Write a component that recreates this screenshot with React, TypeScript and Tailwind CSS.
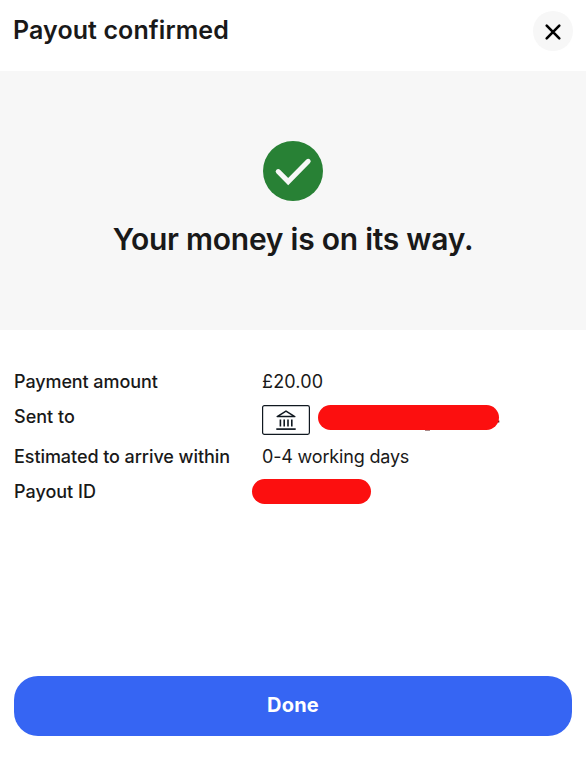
import type { ReactNode } from "react";

function CloseIcon() {
  return (
    <svg className="mt-[2px] h-5 w-5" viewBox="0 0 20 20" fill="none" stroke="#000" strokeWidth="2.6" strokeLinecap="round">
      <path d="M3.7 3.7 16.3 16.3M16.3 3.7 3.7 16.3" />
    </svg>
  );
}

function SuccessIcon() {
  return (
    <svg className="h-[60px] w-[60px]" viewBox="0 0 60 60" fill="none">
      <circle cx="30" cy="30" r="30" fill="#288135" />
      <path d="M15.2 30.6 25.2 40.6 45.2 20.3" stroke="#f7f7f7" strokeWidth="5" strokeLinecap="round" />
    </svg>
  );
}

function BankIcon() {
  return (
    <svg className="h-[30px] w-12" viewBox="0 0 48 30" fill="none" stroke="#101820">
      <rect x="0.6" y="0.6" width="46.8" height="28.8" rx="1.8" strokeWidth="1.2" fill="#fff" />
      <path d="M15.2 11.6 24 6.1l8.8 5.5z" strokeWidth="1.5" strokeLinejoin="round" />
      <path d="M18.4 14.4v7M22.2 14.4v7M26 14.4v7M29.8 14.4v7" strokeWidth="1.6" />
      <path d="M14.3 24.1h19.4" strokeWidth="1.7" />
    </svg>
  );
}

function DetailRow({ label, labelClass, children }: { label: string; labelClass: string; children: ReactNode }) {
  return (
    <div className="flex items-start">
      <dt className="w-[248px] shrink-0 whitespace-nowrap font-medium">
        <span className={labelClass}>{label}</span>
      </dt>
      <dd className="flex whitespace-nowrap">{children}</dd>
    </div>
  );
}

export default function App() {
  return (
    <main className="flex h-[759px] w-[586px] flex-col bg-white font-['Inter','Liberation_Sans',sans-serif] text-[#191919]">
      <header className="flex h-[71px] shrink-0 items-start justify-between pt-[11px] pr-[13px] pl-[13px]">
        <h1 className="text-[25px] leading-[39px] font-semibold tracking-[0.1px]">Payout confirmed</h1>
        <button className="flex h-10 w-10 items-center justify-center rounded-full bg-[#f7f7f7]" aria-label="Close">
          <CloseIcon />
        </button>
      </header>

      <section className="flex h-[259px] shrink-0 flex-col items-center bg-[#f7f7f7] pt-[70px]">
        <SuccessIcon />
        <h2 className="mt-[18px] text-[30px] leading-[41px] font-semibold whitespace-nowrap tracking-[-0.25px]">
          Your money is on its way.
        </h2>
      </section>

      <dl className="flex flex-col px-[14px] pt-[40px] text-lg leading-6">
        <DetailRow label="Payment amount" labelClass="tracking-[-0.09px]">
          <span className="tracking-[0.15px]">£20.00</span>
        </DetailRow>
        <div className="mt-[11px]">
          <DetailRow label="Sent to" labelClass="tracking-[0px]">
            <BankIcon />
            <svg className="ml-2 h-[26px] w-[182px]" viewBox="0 0 182 26">
              <path d="M107 24.6h5v.9h-5zM179.5 15.5h1.8v2h-1.8z" fill="#541414" />
              <rect width="181" height="25" rx="12.5" fill="#fc0f0f" />
            </svg>
          </DetailRow>
        </div>
        <div className="mt-[10px]">
          <DetailRow label="Estimated to arrive within" labelClass="tracking-[-0.07px]">
            <span className="tracking-[-0.18px]">0-4 working days</span>
          </DetailRow>
        </div>
        <div className="mt-[11px]">
          <DetailRow label="Payout ID" labelClass="tracking-[0px]">
            <span className="-mt-px -ml-[10px] h-[25px] w-[119px] rounded-full bg-[#fc0f0f]" />
          </DetailRow>
        </div>
      </dl>

      <footer className="mt-auto px-[14px] pb-[23px]">
        <button className="h-[60px] w-full rounded-[24px] bg-[#3665f3] pb-[2px] text-[20px] font-bold tracking-[0.2px] text-white">
          Done
        </button>
      </footer>
    </main>
  );
}
